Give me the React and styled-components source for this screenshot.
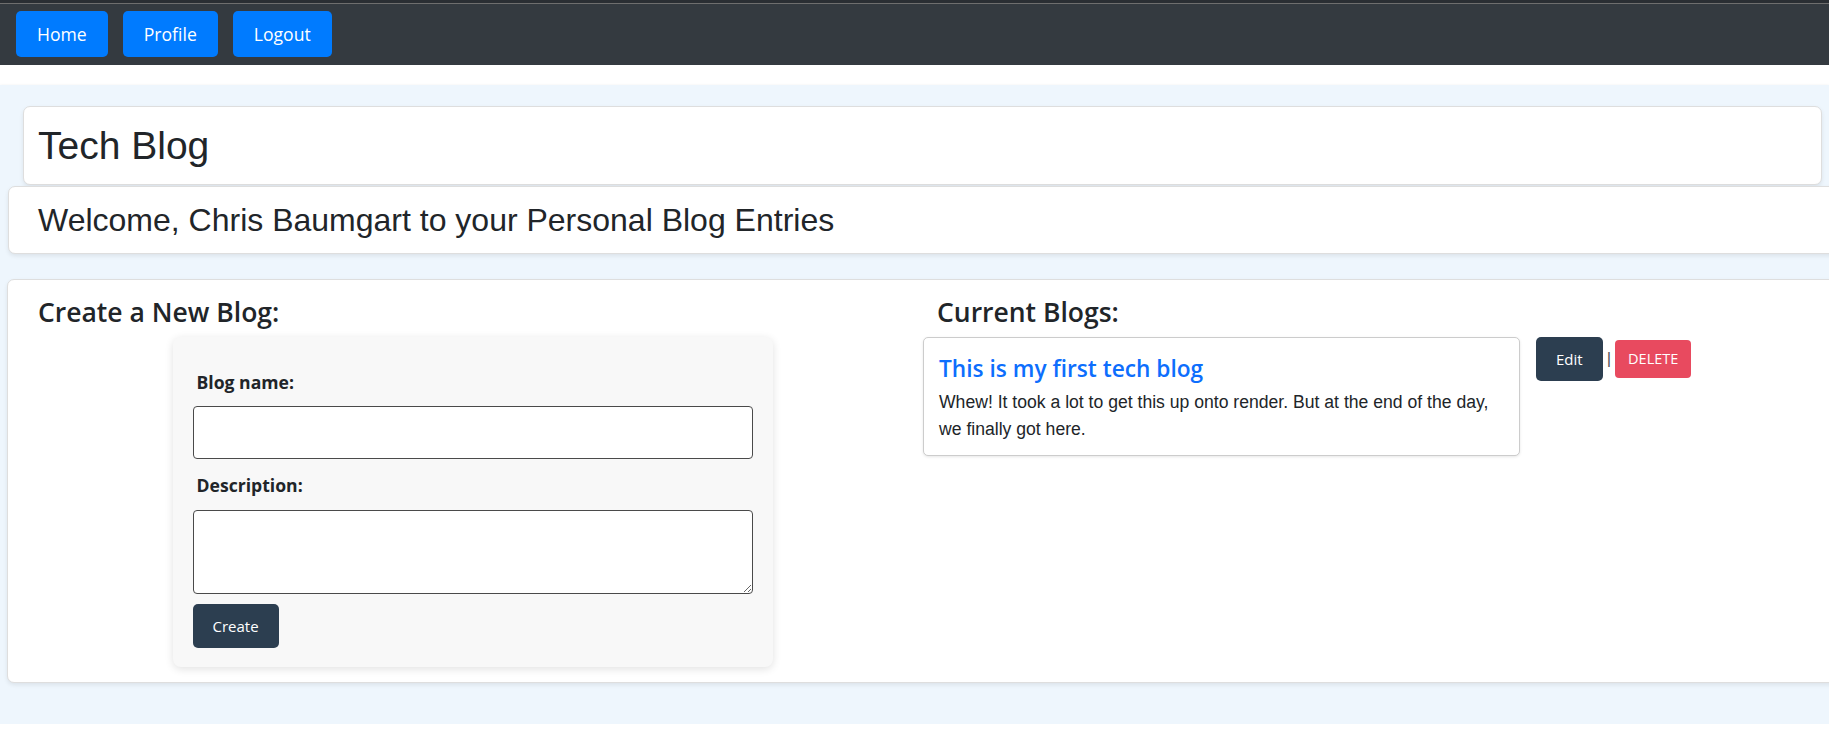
import React from 'react'
import styled, { createGlobalStyle } from 'styled-components'

const GlobalStyle = createGlobalStyle`
    html, body {
        margin: 0;
        padding: 0;
        background: #fff;
        overflow-x: hidden;
    }
    * {
        box-sizing: border-box;
    }
    body {
        font-family: "Open Sans", "Noto Sans", sans-serif;
        color: #212529;
    }
`

//#region styled components

const NavBar = styled.nav`
    height: 65px;
    display: flex;
    align-items: flex-start;
    gap: 15px;
    padding: 11px 16px 0;
    background: linear-gradient(#2a2e33 0 3px, #6e6e6e 3px 4px, #343a40 4px);
`

const NavButton = styled.button`
    height: 46px;
    min-width: 91px;
    padding: 0 21px;
    border: none;
    border-radius: 5px;
    background-color: #007bff;
    color: #fff;
    font-family: "Open Sans", sans-serif;
    font-size: 17.6px;
    cursor: pointer;
`

const Main = styled.main`
    margin-top: 20px;
    padding: 21px 0 41px;
    background-color: #eef6fd;
    box-shadow: 0 1px 3px rgba(0, 0, 0, 0.12);
`

const Card = styled.div`
    background: #fff;
    border: 1px solid #dedede;
    border-radius: 7px;
    box-shadow: 0 2px 4px rgba(0, 0, 0, 0.08);
`

const TitleCard = styled(Card)`
    margin: 0 7px 0 23px;
    padding: 16px 14px 14px;
`

const SiteTitle = styled.h1`
    margin: 0;
    font-family: "Liberation Sans", Arial, sans-serif;
    font-weight: 400;
    font-size: 39px;
    line-height: 1.2;
`

const WelcomeCard = styled(Card)`
    margin: 1px -30px 0 8px;
    padding: 14px 29px 14px;
`

const Welcome = styled.h2`
    margin: 0;
    font-family: "Liberation Sans", Arial, sans-serif;
    font-weight: 400;
    font-size: 32px;
    line-height: 1.2;
`

const DashCard = styled(Card)`
    margin: 25px -30px 0 7px;
    padding: 17px 28px 15px;
    display: grid;
    grid-template-columns: 873px 1fr;
    column-gap: 14px;
`

const Column = styled.section`
    display: flex;
    flex-direction: column;
`

const SectionTitle = styled.h3`
    margin: 0 0 8px ${props => props.indent}px;
    font-size: 26.5px;
    font-weight: 600;
    line-height: 1.2;
`

const FormBox = styled.form`
    align-self: center;
    width: 600px;
    padding: 32px 20px 19px;
    background: #f8f8f8;
    border-radius: 8px;
    box-shadow: 0 2px 8px rgba(0, 0, 0, 0.12);
    display: flex;
    flex-direction: column;
`

const Label = styled.label`
    margin: 0 0 11px 4px;
    font-size: 17.6px;
    font-weight: 700;
    line-height: 1.5;
`

const TextInput = styled.input`
    height: 53px;
    width: 100%;
    margin-bottom: 13px;
    border: 1px solid #4a4a4a;
    border-radius: 4px;
    background: #fff;
`

const TextArea = styled.textarea`
    height: 84px;
    width: 100%;
    border: 1px solid #4a4a4a;
    border-radius: 4px;
    background: #fff;
`

const DarkButton = styled.button`
    height: 44px;
    padding: 0 20px;
    border: none;
    border-radius: 5px;
    background-color: #2c3e50;
    color: #fff;
    font-family: "Open Sans", sans-serif;
    font-size: 15px;
    cursor: pointer;
`

const CreateButton = styled(DarkButton)`
    align-self: flex-start;
    margin-top: 10px;
`

const BlogRow = styled.div`
    display: flex;
    align-items: flex-start;
    gap: 16px;
`

const BlogCard = styled.article`
    width: 597px;
    padding: 17px 15px 13px;
    border: 1px solid #cccccc;
    border-radius: 5px;
    background: #fff;
    box-shadow: 0 1px 3px rgba(0, 0, 0, 0.1);
`

const BlogTitle = styled.h4`
    margin: 0 0 7px;
    color: #0d6efd;
    font-size: 22.7px;
    font-weight: 600;
    line-height: 1.2;
`

const BlogBody = styled.p`
    margin: 0;
    font-family: "Liberation Sans", Arial, sans-serif;
    font-size: 17.6px;
    line-height: 1.5;
    color: #212529;
`

const Actions = styled.div`
    display: flex;
    align-items: center;
    gap: 4px;
    height: 44px;
`

const Divider = styled.span`
    font-family: "Liberation Sans", Arial, sans-serif;
    font-size: 17px;
    color: #555;
`

const DeleteButton = styled.button`
    height: 38px;
    padding: 0 13px;
    border: none;
    border-radius: 4px;
    background-color: #e84a5f;
    color: #fff;
    font-family: "Open Sans", sans-serif;
    font-size: 14.5px;
    cursor: pointer;
`

//#endregion

const blogs = [
    {
        id: 1,
        title: 'This is my first tech blog',
        body: 'Whew! It took a lot to get this up onto render. But at the end of the day, we finally got here.'
    }
]

function App() {
    let renderBlogs = () => {
        return blogs.map(blog => (
            <BlogRow key={blog.id}>
                <BlogCard>
                    <BlogTitle>{blog.title}</BlogTitle>
                    <BlogBody>{blog.body}</BlogBody>
                </BlogCard>
                <Actions>
                    <DarkButton>Edit</DarkButton>
                    <Divider>|</Divider>
                    <DeleteButton>DELETE</DeleteButton>
                </Actions>
            </BlogRow>
        ))
    }

    return (
        <>
            <GlobalStyle />
            <NavBar>
                <NavButton>Home</NavButton>
                <NavButton>Profile</NavButton>
                <NavButton>Logout</NavButton>
            </NavBar>

            <Main>
                <TitleCard>
                    <SiteTitle>Tech Blog</SiteTitle>
                </TitleCard>

                <WelcomeCard>
                    <Welcome>Welcome, Chris Baumgart to your Personal Blog Entries</Welcome>
                </WelcomeCard>

                <DashCard>
                    <Column>
                        <SectionTitle indent={2}>Create a New Blog:</SectionTitle>
                        <FormBox onSubmit={e => e.preventDefault()}>
                            <Label htmlFor="blog-name">Blog name:</Label>
                            <TextInput id="blog-name" type="text" />
                            <Label htmlFor="blog-desc">Description:</Label>
                            <TextArea id="blog-desc" />
                            <CreateButton type="submit">Create</CreateButton>
                        </FormBox>
                    </Column>

                    <Column>
                        <SectionTitle indent={14}>Current Blogs:</SectionTitle>
                        {renderBlogs()}
                    </Column>
                </DashCard>
            </Main>
        </>
    )
}

export default App
